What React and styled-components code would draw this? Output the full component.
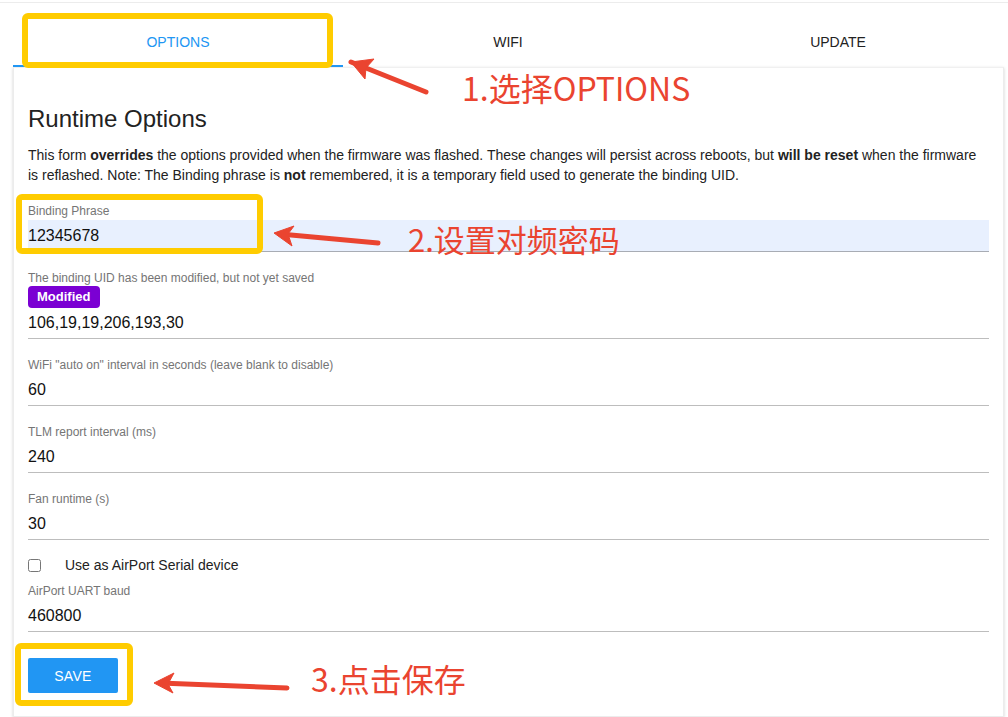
import React from 'react';
import styled, { createGlobalStyle } from 'styled-components';

const GlobalStyle = createGlobalStyle`
  html, body {
    margin: 0;
    padding: 0;
    background: #ffffff;
  }
  body {
    font-family: "Liberation Sans", Arial, sans-serif;
    color: #222222;
  }
  * {
    box-sizing: border-box;
  }
`;

const Page = styled.div`
  position: relative;
  width: 1008px;
  height: 717px;
  padding-top: 2px;
  overflow: hidden;
`;

const TopRule = styled.div`
  height: 1px;
  background: #ececec;
`;

const TabBar = styled.div`
  display: grid;
  grid-template-columns: repeat(3, 330px);
  margin-left: 13px;
  height: 64px;
`;

const Tab = styled.div`
  display: flex;
  justify-content: center;
  padding-top: 31px;
  font-size: 14px;
  line-height: 16px;
  text-transform: uppercase;
  color: ${p => (p.active ? '#2196f3' : '#222222')};
  border-bottom: 2px solid ${p => (p.active ? '#2196f3' : 'transparent')};
`;

const Card = styled.div`
  margin-left: 13px;
  width: 991px;
  height: 650px;
  padding: 24px 14px 0;
  background: #fff;
  border: 1px solid #ececec;
  border-top-color: #f0f0f0;
  box-shadow: 0 1px 3px rgba(0, 0, 0, 0.18);
`;

const Title = styled.h2`
  margin: 13px 0 12px;
  font-size: 24px;
  line-height: 28px;
  font-weight: 400;
  color: #222;
`;

const Intro = styled.p`
  margin: 0 0 19px;
  font-size: 14px;
  line-height: 20px;
  color: #222;

  b {
    font-weight: 700;
  }
`;

const Field = styled.div`
  margin-bottom: ${p => (p.last ? '0' : '19px')};
`;

const Label = styled.div`
  font-size: 12px;
  line-height: 14px;
  color: #757575;
  margin-bottom: ${p => (p.tight ? '1px' : '2px')};
`;

const Input = styled.div`
  height: ${p => (p.short ? '31px' : '32px')};
  padding-top: ${p => (p.short ? '5px' : '6px')};
  font-size: 16px;
  line-height: 20px;
  color: #111;
  background: ${p => (p.filled ? '#e8f0fe' : 'transparent')};
  border-bottom: 1px solid ${p => (p.filled ? '#a8acb4' : '#bdbdbd')};
`;

const Badge = styled.span`
  display: inline-block;
  height: 22px;
  padding: 0 10px 0 9px;
  line-height: 22px;
  font-size: 13px;
  font-weight: 700;
  color: #fff;
  background: #7b00d3;
  border-radius: 4px;
`;

const CheckRow = styled.label`
  display: flex;
  align-items: center;
  height: 20px;
  margin: 15px 0 9px;
  font-size: 14px;
  color: #222;
`;

const Check = styled.input`
  width: 13px;
  height: 13px;
  margin: 0 24px 0 0;
`;

const SaveButton = styled.button`
  margin-top: 26px;
  width: 90px;
  height: 35px;
  border: none;
  border-radius: 2px;
  background: #2196f3;
  color: #fff;
  font-family: "Liberation Sans", Arial, sans-serif;
  font-size: 14px;
  letter-spacing: 0.3px;
  text-transform: uppercase;
`;

/* annotation layer drawn over the screenshot */
const Overlay = styled.div`
  position: absolute;
  inset: 0;
  pointer-events: none;
`;

const Highlight = styled.div`
  position: absolute;
  border: 6px solid #ffcc00;
  border-radius: 6px;
`;

const Note = styled.div`
  position: absolute;
  font-family: "Noto Sans CJK SC", "Noto Sans", sans-serif;
  font-size: ${p => p.size || 32}px;
  line-height: 1;
  color: #ea4430;
  white-space: nowrap;
`;

const ArrowLayer = styled.svg`
  position: absolute;
  left: 0;
  top: 0;
`;

const arrows = [
  { tail: [426, 92], tip: [351, 62], head: '351,62 374,59 366,68 365,79' },
  { tail: [378, 243], tip: [280, 234], head: '274,233 294,226 288,234 292,246' },
  { tail: [287, 688], tip: [160, 683], head: '154,683 174,673 168,684 173,693' },
];

const boxes = [
  { left: 22, top: 13, width: 311, height: 55 },
  { left: 16, top: 194, width: 247, height: 60 },
  { left: 15, top: 643, width: 118, height: 63 },
];

const fields = [
  { label: 'WiFi "auto on" interval in seconds (leave blank to disable)', value: '60' },
  { label: 'TLM report interval (ms)', value: '240' },
  { label: 'Fan runtime (s)', value: '30' },
];

export default function App() {
  return (
    <>
      <GlobalStyle />
      <Page>
        <TopRule />
        <TabBar>
          <Tab active>Options</Tab>
          <Tab>WiFi</Tab>
          <Tab>Update</Tab>
        </TabBar>

        <Card>
          <Title>Runtime Options</Title>
          <Intro>
            This form <b>overrides</b> the options provided when the firmware was flashed. These
            changes will persist across reboots, but <b>will be reset</b> when the firmware is
            reflashed. Note: The Binding phrase is <b>not</b> remembered, it is a temporary field
            used to generate the binding UID.
          </Intro>

          <Field>
            <Label>Binding Phrase</Label>
            <Input filled>12345678</Input>
          </Field>

          <Field>
            <Label tight>The binding UID has been modified, but not yet saved</Label>
            <Badge>Modified</Badge>
            <Input short>106,19,19,206,193,30</Input>
          </Field>

          {fields.map((f, i) => (
            <Field key={f.label} last={i === fields.length - 1}>
              <Label>{f.label}</Label>
              <Input>{f.value}</Input>
            </Field>
          ))}

          <CheckRow>
            <Check type="checkbox" />
            Use as AirPort Serial device
          </CheckRow>

          <Field last>
            <Label>AirPort UART baud</Label>
            <Input>460800</Input>
          </Field>

          <SaveButton>Save</SaveButton>
        </Card>

        <Overlay>
          {boxes.map((b, i) => (
            <Highlight key={i} style={b} />
          ))}
          <ArrowLayer width="1008" height="717" viewBox="0 0 1008 717">
            {arrows.map((a, i) => (
              <g key={i} fill="#ea4430" stroke="#ea4430">
                <line
                  x1={a.tail[0]}
                  y1={a.tail[1]}
                  x2={a.tip[0]}
                  y2={a.tip[1]}
                  strokeWidth="5"
                  strokeLinecap="round"
                />
                <polygon points={a.head} strokeWidth="1" strokeLinejoin="round" />
              </g>
            ))}
          </ArrowLayer>
          <Note style={{ left: 462, top: 71 }}>1.选择OPTIONS</Note>
          <Note size={31} style={{ left: 408, top: 223 }}>2.设置对频密码</Note>
          <Note style={{ left: 311, top: 662 }}>3.点击保存</Note>
        </Overlay>
      </Page>
    </>
  );
}
